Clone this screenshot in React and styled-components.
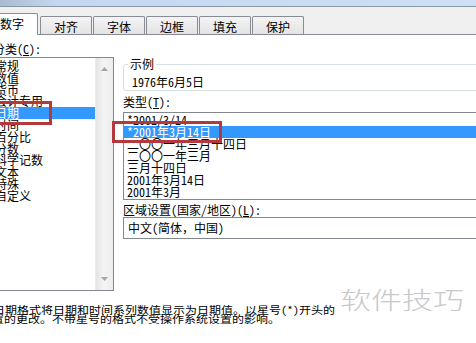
import React from 'react';
import styled, { createGlobalStyle } from 'styled-components';

const GlobalStyle = createGlobalStyle`
  html, body {
    margin: 0;
    padding: 0;
    background: #ffffff;
  }
  body {
    width: 476px;
    height: 343px;
    overflow: hidden;
    font-family: "Noto Sans Mono CJK SC", "Noto Sans CJK SC", sans-serif;
    font-size: 12px;
    color: #000000;
  }
`;

const Dialog = styled.div`
  position: relative;
  width: 476px;
  height: 343px;
  overflow: hidden;
  background: #ffffff;
`;

// the bit of the aero frame left above the tabs
const FrameEdge = styled.div`
  height: 6px;
  background: linear-gradient(to right, #a9bbcf 0%, #c3d8ef 12%, #cde0f5 100%);
  border-bottom: 1px solid #8b97a5;
`;

const TabBar = styled.div`
  height: 27px;
  background: #f0f0f0;
  border-bottom: 1px solid #898c95;
  display: flex;
  align-items: flex-end;
`;

const TabRow = styled.div`
  display: flex;
  align-items: flex-end;
  gap: 1px;
  margin-left: -14px;
`;

const Tab = styled.div`
  box-sizing: border-box;
  width: 52px;
  height: ${({ active }) => (active ? '22px' : '18px')};
  margin-bottom: ${({ active }) => (active ? '-1px' : '0')};
  margin-right: ${({ active }) => (active ? '1px' : '0')};
  padding-top: 4px;
  border: 1px solid #898c95;
  border-bottom: none;
  border-radius: 2px 2px 0 0;
  background: ${({ active }) => (active ? '#ffffff' : 'linear-gradient(#f4f4f4, #e3e3e3)')};
  position: relative;
  z-index: ${({ active }) => (active ? 1 : 0)};
  line-height: 12px;
  text-align: center;
  white-space: nowrap;
`;

const Panel = styled.div`
  display: flex;
  gap: 9px;
  padding-top: 8px;
  margin-left: -9px;
`;

const LeftColumn = styled.div`
  width: 123px;
  flex-shrink: 0;
`;

const RightColumn = styled.div`
  width: 400px;
  flex-shrink: 0;
`;

const FieldLabel = styled.div`
  height: 12px;
  line-height: 12px;
  padding-left: ${({ indent }) => indent || 0}px;
  margin-top: ${({ top }) => top || 0}px;
  white-space: nowrap;
`;

const ListBox = styled.div`
  box-sizing: border-box;
  position: relative;
  height: ${({ h }) => h}px;
  margin-top: ${({ top }) => top || 0}px;
  border: 1px solid #828790;
  background: #ffffff;
  display: flex;
`;

const Items = styled.div`
  flex: 1;
  padding-top: ${({ pad }) => pad}px;
  overflow: hidden;
`;

const Item = styled.div`
  height: ${({ h }) => h}px;
  line-height: ${({ h }) => h}px;
  padding-left: 3px;
  white-space: nowrap;
  background: ${({ selected }) => (selected ? '#3399ff' : 'transparent')};
  color: ${({ selected }) => (selected ? '#ffffff' : '#000000')};
`;

const ScrollBar = styled.div`
  width: 17px;
  flex-shrink: 0;
  display: flex;
  flex-direction: column;
  justify-content: space-between;
  background: linear-gradient(to right, #e4e4e4, #f4f4f4 45%, #ededed);
  border-left: 1px solid #ececec;
`;

const ScrollButton = styled.div`
  height: 22px;
  display: flex;
  align-items: center;
  justify-content: center;
`;

// red annotation frame drawn over the dialog
const Marker = styled.div`
  position: absolute;
  box-sizing: border-box;
  left: ${({ x }) => x}px;
  top: ${({ y }) => y}px;
  width: ${({ w }) => w}px;
  height: ${({ h }) => h}px;
  border: 3px solid #b5383d;
  pointer-events: none;
  z-index: 2;
`;

const GroupBox = styled.fieldset`
  margin: 15px 0 0 0;
  padding: 6px 8px 2px;
  min-width: 0;
  border: 1px solid #d5dfe5;
  border-radius: 3px;
  line-height: 12px;
`;

const Legend = styled.legend`
  padding: 0 2px;
  margin-left: -4px;
  line-height: 12px;
`;

const TypeListWrap = styled.div`
  position: relative;
  margin-top: 4px;
`;

const LocaleBox = styled.div`
  box-sizing: border-box;
  height: 22px;
  margin-top: 1px;
  padding: 4px 0 0 4px;
  border: 1px solid #828790;
  line-height: 12px;
  white-space: nowrap;
`;

const Description = styled.div`
  margin-top: 14px;
  margin-left: -7px;
  line-height: 10.5px;
  transform: scaleY(0.86);
  transform-origin: top left;
  white-space: nowrap;
`;

const DescLine = styled.div`
  margin-left: ${({ shift }) => shift || 0}px;
`;

const Watermark = styled.div`
  position: absolute;
  left: 340px;
  top: 283px;
  font-family: "Noto Sans CJK SC", sans-serif;
  font-size: 31px;
  font-weight: 300;
  line-height: 31px;
  color: #c9c9c9;
  transform: scaleY(0.78);
  white-space: nowrap;
`;

const Arrow = ({ down }) => (
  <svg width="7" height="4" viewBox="0 0 7 4">
    <path d={down ? 'M0 0H7L3.5 4Z' : 'M0 4H7L3.5 0Z'} fill="#a6a6a6" />
  </svg>
);

const tabs = ['数字', '对齐', '字体', '边框', '填充', '保护'];
const categories = ['常规', '数值', '货币', '会计专用', '日期', '时间', '百分比', '分数', '科学记数', '文本', '特殊', '自定义'];
const types = ['*2001/3/14', '*2001年3月14日', '二〇〇一年三月十四日', '二〇〇一年三月', '三月十四日', '2001年3月14日', '2001年3月'];

export default function App() {
  return (
    <Dialog>
      <GlobalStyle />
      <FrameEdge />
      <TabBar>
        <TabRow>
          {tabs.map((t, i) => (
            <Tab key={t} active={i === 0}>{t}</Tab>
          ))}
        </TabRow>
      </TabBar>
      <Panel>
        <LeftColumn>
          <FieldLabel indent={2}>分类(<u>C</u>):</FieldLabel>
          <ListBox h={234} top={2}>
            <Items pad={2}>
              {categories.map((c) => (
                <Item key={c} h={11.8} selected={c === '日期'}>{c}</Item>
              ))}
            </Items>
            <ScrollBar>
              <ScrollButton><Arrow /></ScrollButton>
              <ScrollButton><Arrow down /></ScrollButton>
            </ScrollBar>
            <Marker x={-5} y={43} w={65} h={24} />
          </ListBox>
        </LeftColumn>
        <RightColumn>
          <GroupBox>
            <Legend>示例</Legend>
            1976年6月5日
          </GroupBox>
          <FieldLabel top={5}>类型(<u>T</u>):</FieldLabel>
          <TypeListWrap>
            <ListBox h={88}>
              <Items pad={1}>
                {types.map((t, i) => (
                  <Item key={t} h={12} selected={i === 1}>{t}</Item>
                ))}
              </Items>
            </ListBox>
            <Marker x={-11} y={9} w={110} h={22} />
          </TypeListWrap>
          <FieldLabel top={4}>区域设置(国家/地区)(<u>L</u>):</FieldLabel>
          <LocaleBox>中文(简体，中国)</LocaleBox>
        </RightColumn>
      </Panel>
      <Description>
        <DescLine>日期格式将日期和时间系列数值显示为日期值。以星号(*)开头的</DescLine>
        <DescLine shift={-1}>置的更改。不带星号的格式不受操作系统设置的影响。</DescLine>
      </Description>
      <Watermark>软件技巧</Watermark>
    </Dialog>
  );
}
